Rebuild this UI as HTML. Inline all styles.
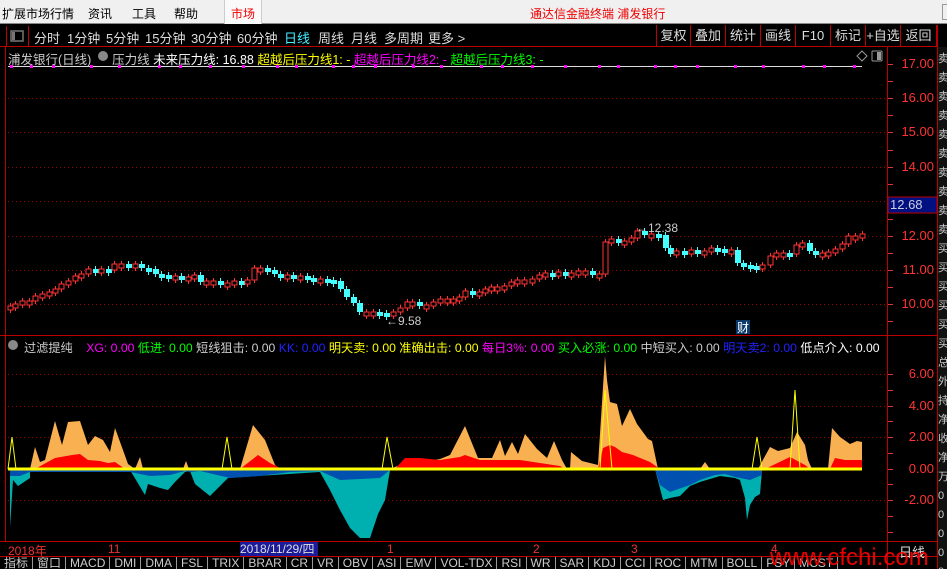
<!DOCTYPE html>
<html><head><meta charset="utf-8"><style>
*{margin:0;padding:0;box-sizing:border-box}
html,body{width:947px;height:569px;overflow:hidden}
body{background:#000;position:relative;font-family:"Liberation Sans","Noto Sans CJK SC",sans-serif;font-size:12px}
.a{position:absolute;white-space:nowrap}
#menu{position:absolute;left:0;top:0;width:947px;height:24px;background:#f0f0f0;border-bottom:1px solid #888}
#menu span{position:absolute;top:5px;font-size:12px;color:#000}
.btn{position:absolute;top:25px;height:21px;border-left:1px solid #b00;color:#ddd;font-size:13px;text-align:center;line-height:21px}
.ax{position:absolute;left:890px;width:44px;text-align:right;color:#f33;font-size:13px}
.tb{position:absolute;top:28px;color:#ddd;font-size:13px}
</style></head><body>
<div id="menu">
<span style="left:2px">扩展市场行情</span><span style="left:88px">资讯</span><span style="left:132px">工具</span><span style="left:174px">帮助</span>
<div class="a" style="left:224px;top:0;width:38px;height:24px;border-left:1px solid #ccc;border-right:1px solid #ccc;background:#fafafa"></div>
<span style="left:231px;color:#e00">市场</span>
<span style="left:530px;color:#e00">通达信金融终端&nbsp;浦发银行</span>
<div class="a" style="left:942px;top:4px;width:6px;height:16px;border:1px solid #999"></div>
</div>
<svg class="a" style="left:0;top:0" width="947" height="569">
<line x1="6.5" y1="26" x2="6.5" y2="46" stroke="#b00"/>
<line x1="28.5" y1="26" x2="28.5" y2="46" stroke="#b00"/>
<rect x="11" y="31" width="12" height="10" fill="none" stroke="#777" stroke-width="1.5"/><rect x="12" y="32" width="3" height="8" fill="#777"/>
<line x1="0" y1="46.5" x2="937" y2="46.5" stroke="#b00"/>
<line x1="5.5" y1="47" x2="5.5" y2="542" stroke="#b00"/>
<line x1="887.5" y1="47" x2="887.5" y2="569" stroke="#b00"/>
<line x1="937.5" y1="25" x2="937.5" y2="569" stroke="#b00"/>
<line x1="0" y1="335.5" x2="937" y2="335.5" stroke="#b00"/>
<line x1="0" y1="541.5" x2="937" y2="541.5" stroke="#b00"/>
<line x1="0" y1="556.5" x2="937" y2="556.5" stroke="#b00"/>
<rect x="938" y="47" width="9" height="522" fill="#111"/>
<g id="grid" stroke="#900" stroke-dasharray="1,3"></g>
<g id="ticks" stroke="#d33"></g>
<line x1="8" y1="66.5" x2="862" y2="66.5" stroke="#ddd"/>
<g id="dots" fill="#f0f"></g>
<g id="ind"></g>
<g id="cand"></g>
<rect x="888" y="197" width="49" height="16" fill="#001080" stroke="#b00"/>
<text x="890" y="209" fill="#ccd" font-size="13" font-family="Liberation Sans">12.68</text>
<text x="636" y="232" fill="#ccc" font-size="12" font-family="Liberation Sans">←12.38</text>
<text x="386" y="325" fill="#ccc" font-size="12" font-family="Liberation Sans">←9.58</text>
<rect x="736" y="320" width="14" height="14" fill="#0a3a6a"/>
<text x="737" y="332" fill="#fff" font-size="12" font-family="Noto Sans CJK SC">财</text>
<path d="M862 51 l5 5 -5 5 -5 -5z" fill="none" stroke="#999"/>
<rect x="872" y="51" width="10" height="10" rx="1" fill="none" stroke="#999"/><rect x="877" y="52" width="4" height="8" fill="#999"/>
<circle cx="13" cy="345" r="5" fill="#888"/>
<circle cx="103" cy="56" r="5" fill="#888"/>
</svg>
<div class="tb" style="left:34px">分时</div><div class="tb" style="left:67px">1分钟</div><div class="tb" style="left:106px">5分钟</div><div class="tb" style="left:145px">15分钟</div><div class="tb" style="left:191px">30分钟</div><div class="tb" style="left:237px">60分钟</div><div class="tb" style="left:284px;color:#4ef">日线</div><div class="tb" style="left:318px">周线</div><div class="tb" style="left:351px">月线</div><div class="tb" style="left:384px">多周期</div><div class="tb" style="left:428px">更多 &gt;</div>
<div class="btn" style="left:656px;width:34px">复权</div><div class="btn" style="left:690px;width:35px">叠加</div><div class="btn" style="left:725px;width:35px">统计</div><div class="btn" style="left:760px;width:35px">画线</div><div class="btn" style="left:795px;width:35px">F10</div><div class="btn" style="left:830px;width:35px">标记</div><div class="btn" style="left:865px;width:35px">+自选</div><div class="btn" style="left:900px;width:37px;border-right:1px solid #b00">返回</div>
<div class="a" style="left:8px;top:49px;font-size:12.5px;color:#ccc">浦发银行(日线)&nbsp;&nbsp;&nbsp;&nbsp;&nbsp;&nbsp;压力线&nbsp;<span style="color:#fff">未来压力线: 16.88</span>&nbsp;<span style="color:#ff0">超越后压力线1: -</span>&nbsp;<span style="color:#f0f">超越后压力线2: -</span>&nbsp;<span style="color:#0f0">超越后压力线3: -</span></div>
<div class="a" style="left:24px;top:338px;font-size:12.2px;color:#ccc">过滤提纯&nbsp;&nbsp;&nbsp;&nbsp;<span style="color:#f0f">XG: 0.00</span>&nbsp;<span style="color:#0f0">低进: 0.00</span>&nbsp;短线狙击: 0.00&nbsp;<span style="color:#22f">KK: 0.00</span>&nbsp;<span style="color:#ff0">明天卖: 0.00</span>&nbsp;<span style="color:#ff0">准确出击: 0.00</span>&nbsp;<span style="color:#f0f">每日3%: 0.00</span>&nbsp;<span style="color:#0f0">买入必涨: 0.00</span>&nbsp;中短买入: 0.00&nbsp;<span style="color:#22f">明天卖2: 0.00</span>&nbsp;<span style="color:#fff">低点介入: 0.00</span></div>
<div class="ax" style="top:56px">17.00</div><div class="ax" style="top:90px">16.00</div><div class="ax" style="top:124px">15.00</div><div class="ax" style="top:159px">14.00</div><div class="ax" style="top:228px">12.00</div><div class="ax" style="top:262px">11.00</div><div class="ax" style="top:296px">10.00</div>
<div class="ax" style="top:366px">6.00</div><div class="ax" style="top:398px">4.00</div><div class="ax" style="top:429px">2.00</div><div class="ax" style="top:461px">0.00</div><div class="ax" style="top:492px">-2.00</div>
<div class="a" style="top:542px;left:8px;color:#e33;font-size:12px">2018年</div>
<div class="a" style="top:542px;left:108px;color:#e33">11</div>
<div class="a" style="top:542px;left:240px;width:78px;height:14px;background:#1a1a9a;color:#ddd;font-size:12px;line-height:14px">2018/11/29/四</div>
<div class="a" style="top:542px;left:387px;color:#e33">1</div><div class="a" style="top:542px;left:533px;color:#e33">2</div><div class="a" style="top:542px;left:631px;color:#e33">3</div><div class="a" style="top:542px;left:771px;color:#e33">4</div>
<div class="a" style="top:542px;left:899px;color:#ddd;font-size:13px">日线</div>
<div class="a" style="top:557px;left:0;height:12px;overflow:hidden;color:#ccc;font-size:12px;line-height:12px" id="tabs"></div>
<div class="a" style="top:546px;left:770px;color:#f00;font-size:24px;line-height:24px;opacity:.9;font-family:'Liberation Sans',sans-serif">www.cfchi.com</div>
<div class="a" style="left:938px;top:50px;color:#ccc;font-size:11px;line-height:19px;width:9px;height:519px;overflow:hidden">卖<br>卖<br>卖<br>卖<br>卖<br>卖<br>卖<br>卖<br>卖<br>卖<br>买<br>买<br>买<br>买<br>买<br>买<br>总<br>外<br>持<br>净<br>收<br>净<br>万<br>0<br>0<br>0<br>0<br>0</div>
<script>
(function(){
var NS="http://www.w3.org/2000/svg";
function el(p,t,a){var e=document.createElementNS(NS,t);for(var k in a)e.setAttribute(k,a[k]);p.appendChild(e);return e}
var g=document.getElementById('grid');
[98,132,167,201,236,270,304,374,406,437,500].forEach(function(y){el(g,'line',{x1:8,y1:y+.5,x2:887,y2:y+.5})});
var tk=document.getElementById('ticks');
[64,81,98,115,132,150,167,184,201,219,236,253,270,287,304,321,374,390,406,421,437,453,469,484,500,516,532].forEach(function(y){el(tk,'line',{x1:888,y1:y+.5,x2:893,y2:y+.5})});
var d=document.getElementById('dots');
for(var x=10;x<860;x+=19+((x*7)%23)){el(d,'rect',{x:x,y:65,width:3,height:3})}
var c=[[10,307],[15,305],[22,302],[29,302],[35,297],[42,295],[49,293],[55,290],[61,285],[68,282],[75,277],[81,275],[88,270],[95,273],[101,270],[108,271],[114,265],[121,265],[128,267],[135,265],[141,269],[148,270],[155,275],[161,276],[168,279],[175,277],[181,278],[188,278],[194,276],[200,283],[206,282],[213,282],[220,284],[227,284],[234,282],[241,283],[247,281],[254,269],[260,269],[267,271],[274,275],[280,277],[287,276],[293,277],[300,277],[307,279],[313,281],[320,280],[327,281],[333,282],[340,290],[346,298],[353,304],[359,313],[366,313],[373,313],[379,314],[386,316],[393,313],[400,309],[407,303],[412,303],[419,306],[426,306],[433,303],[440,300],[447,300],[453,300],[459,298],[465,292],[472,293],[479,293],[485,290],[491,288],[497,288],[504,287],[511,283],[517,281],[524,281],[532,280],[539,276],[545,274],[552,275],[558,273],[565,274],[571,274],[578,272],[585,272],[592,275],[599,275],[605,243],[611,240],[618,243],[624,242],[631,239],[637,232],[644,235],[651,235],[658,236],[665,249],[670,255],[676,252],[684,255],[691,251],[697,252],[704,252],[711,249],[717,250],[724,253],[731,251],[737,264],[743,266],[750,267],[756,270],[762,266],[770,257],[776,254],[783,254],[789,255],[796,246],[802,244],[809,252],[815,254],[822,254],[828,253],[835,250],[842,245],[848,237],[855,237],[862,235]];
var cg=document.getElementById('cand');
for(var i=0;i<c.length;i++){var x=c[i][0],y=c[i][1],p=i?c[i-1][1]:y+2;var up=y<=p;var h=Math.max(4,Math.abs(y-p));var ty=(up?y:p)-1;var col=up?'#f33':'#4ff';
el(cg,'line',{x1:x+.5,y1:ty-3,x2:x+.5,y2:ty+h+3,stroke:col});
if(up)el(cg,'rect',{x:x-2,y:ty,width:5,height:h,fill:'#000',stroke:col});else el(cg,'rect',{x:x-2,y:ty,width:6,height:h,fill:col});}
var ig=document.getElementById('ind');
function poly(pts,f){el(ig,'polygon',{points:pts.map(function(p){return p.join(',')}).join(' '),fill:f})}
poly([[10,469],[30,469],[35,447],[40,462],[45,460],[55,421],[62,445],[68,422],[80,421],[88,445],[95,436],[103,440],[110,452],[115,428],[128,464],[135,469],[140,457],[143,469],[183,469],[186,461],[189,469],[240,469],[253,425],[265,440],[275,465],[280,469],[390,469],[400,465],[440,459],[450,455],[465,426],[478,458],[492,458],[500,440],[505,456],[512,442],[518,454],[525,434],[537,449],[547,458],[554,441],[562,460],[567,469],[570,469],[571,452],[582,461],[598,465],[605,356],[607,380],[610,402],[617,404],[622,426],[630,409],[637,424],[648,439],[652,441],[658,469],[700,469],[705,462],[710,469],[758,469],[770,447],[778,451],[790,448],[797,432],[805,445],[808,460],[812,469],[828,469],[832,428],[840,437],[850,444],[857,441],[862,442],[862,469]],'#f8b050');
poly([[35,469],[55,458],[72,455],[80,454],[88,460],[100,461],[108,463],[115,462],[125,469],[240,469],[258,455],[270,463],[282,469],[395,469],[405,458],[420,458],[440,460],[460,457],[465,455],[480,460],[500,460],[520,460],[540,463],[560,466],[565,469],[598,469],[603,448],[610,445],[615,447],[622,452],[633,455],[650,462],[660,469],[765,469],[790,457],[805,465],[810,469],[830,469],[835,458],[845,460],[862,460],[862,469]],'#f00');
poly([[10,469],[10,527],[13,480],[18,486],[30,478],[30,470],[130,470],[145,495],[148,484],[160,488],[168,490],[175,482],[185,472],[190,471],[195,484],[210,496],[220,486],[228,478],[320,472],[330,490],[340,510],[350,528],[360,538],[370,538],[378,514],[385,500],[390,470]],'#00b0b0');
poly([[655,469],[663,500],[670,498],[680,496],[690,486],[700,482],[720,476],[735,478],[740,480],[745,498],[747,520],[750,505],[755,497],[760,494],[762,470]],'#00b0b0');
poly([[10,469],[10,476],[20,476],[30,472],[130,472],[150,476],[170,475],[185,471],[190,472],[200,471],[230,478],[260,476],[290,472],[320,471],[340,480],[380,478],[390,470]],'#0050b0');
poly([[655,469],[660,485],[670,492],[690,485],[700,480],[715,475],[725,474],[735,477],[750,480],[762,475],[762,469]],'#0050b0');
[[8,12,16,437],[222,227,232,437],[382,387,393,437],[600,605,612,390],[752,757,762,437],[790,795,800,390]].forEach(function(s){el(ig,'polyline',{points:s[0]+',469 '+s[1]+','+s[3]+' '+s[2]+',469',fill:'none',stroke:'#ff0'})});
el(ig,'line',{x1:8,y1:469,x2:862,y2:469,stroke:'#ff0','stroke-width':3});
var t=['指标','窗口','MACD','DMI','DMA','FSL','TRIX','BRAR','CR','VR','OBV','ASI','EMV','VOL-TDX','RSI','WR','SAR','KDJ','CCI','ROC','MTM','BOLL','PSY','MCST'];
document.getElementById('tabs').innerHTML=t.map(function(s){return '<span style="display:inline-block;padding:0 4px;border-right:1px solid #999;height:12px">'+s+'</span>'}).join('');
})();
</script>
</body></html>
